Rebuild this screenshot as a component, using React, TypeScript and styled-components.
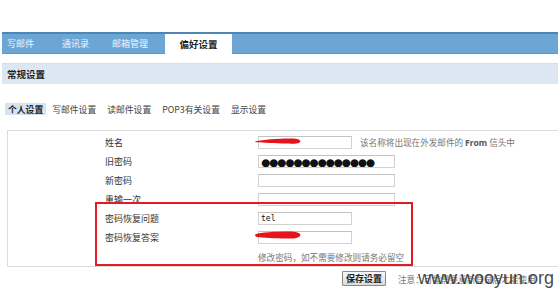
import React from "react";
import styled, { createGlobalStyle } from "styled-components";

const Global = createGlobalStyle`
  html, body { margin: 0; padding: 0; background: #fff; }
  body { font-family: "Noto Sans CJK SC", "Noto Sans", sans-serif; color: #333; }
  * { box-sizing: border-box; }
`;

const Page = styled.div`
  width: 558px;
  height: 291px;
  padding: 32px 0 0 2px;
  overflow: hidden;
`;

const TabBar = styled.div`
  display: flex;
  height: 22px;
  background: #6ba6d4;
  border-top: 2px solid #4e87b7;
  border-bottom: 1px solid #5f9acb;
`;

const Tab = styled.div<{ $w: number; $active?: boolean }>`
  width: ${(p) => p.$w}px;
  display: flex;
  align-items: center;
  justify-content: ${(p) => (p.$active ? "center" : "flex-start")};
  padding-left: ${(p) => (p.$active ? 0 : 5)}px;
  font-size: ${(p) => (p.$active ? 9.5 : 9)}px;
  font-weight: ${(p) => (p.$active ? 700 : 400)};
  color: ${(p) => (p.$active ? "#1e1e1e" : "#eef5fb")};
  background: ${(p) => (p.$active ? "#fff" : "transparent")};
  margin-bottom: ${(p) => (p.$active ? -1 : 0)}px;
`;

const SectionHeader = styled.div`
  margin-top: 9px;
  height: 21px;
  display: flex;
  align-items: center;
  padding-left: 5px;
  background: #dce7f3;
  border-top: 1px solid #d2dfed;
  font-size: 9.5px;
  font-weight: 700;
  color: #1e1e1e;
`;

const SubTabs = styled.div`
  margin-top: 19px;
  display: flex;
  gap: 3px;
  padding-left: 3px;
  height: 12px;
`;

const SubTab = styled.div<{ $active?: boolean }>`
  display: flex;
  align-items: center;
  padding: 0 3px;
  margin-right: ${(p) => (p.$active ? 0 : 2)}px;
  font-size: 8.8px;
  font-weight: ${(p) => (p.$active ? 700 : 400)};
  color: ${(p) => (p.$active ? "#1e1e1e" : "#444")};
  background: ${(p) => (p.$active ? "#d6e3f1" : "transparent")};
`;

const Panel = styled.div`
  position: relative;
  margin: 15px 0 0 5px;
  border: 1px solid #dcdcdc;
  border-right: none;
  padding-top: 2px;
`;

const Row = styled.div`
  display: flex;
  align-items: center;
  height: 19px;
  padding-left: 97px;
`;

const Label = styled.div`
  width: 153px;
  font-size: 9px;
  color: #333;
`;

const FieldWrap = styled.div`
  position: relative;
  display: flex;
`;

const Field = styled.input<{ $w: number; $mono?: boolean }>`
  width: ${(p) => p.$w}px;
  height: 13px;
  padding: 0 2px;
  border: 1px solid #d2d2d2;
  border-top-color: #c2c2c2;
  background: #fff;
  font-family: ${(p) => (p.$mono ? '"DejaVu Sans Mono", monospace' : '"DejaVu Sans", sans-serif')};
  font-size: ${(p) => (p.$mono ? 8 : 10.5)}px;
  color: #111;
  outline: none;
  letter-spacing: ${(p) => (p.$mono ? 0 : -1.1)}px;
`;

const Scribble = styled.svg<{ $top: number }>`
  position: absolute;
  left: -3px;
  top: ${(p) => p.$top}px;
  width: 46px;
  height: 8px;
  overflow: visible;
`;

const Hint = styled.div`
  margin-left: 8px;
  font-size: 8.6px;
  color: #777;
  white-space: nowrap;
  b { font-family: "Noto Sans", sans-serif; font-weight: 700; color: #555; }
`;

const RowHint = styled(Hint)`
  margin-left: 0;
`;

const Highlight = styled.div`
  position: absolute;
  left: 87px;
  top: 71px;
  width: 318px;
  height: 64px;
  border: 2px solid #e01b22;
  pointer-events: none;
`;

const Footer = styled.div`
  position: relative;
  margin-top: 4px;
  display: flex;
  align-items: center;
  padding-left: 340px;
  gap: 12px;
`;

const SaveButton = styled.button`
  height: 15px;
  padding: 0 3px;
  border: 1px solid #8a8a8a;
  border-radius: 1px;
  background: linear-gradient(#f7f7f7, #dcdcdc);
  font-family: "Noto Sans CJK SC", sans-serif;
  font-size: 9px;
  font-weight: 700;
  color: #222;
  line-height: 1;
`;

const Note = styled.div`
  font-size: 8.6px;
  color: #777;
  white-space: nowrap;
`;

const Watermark = styled.div`
  position: absolute;
  left: 416px;
  top: -2px;
  font-family: "Liberation Sans", Arial, sans-serif;
  font-size: 18px;
  line-height: 18px;
  color: rgba(45, 45, 45, 0.88);
  white-space: nowrap;
`;

const NAME_MARK =
  "M0.5 4.2 C 8 2.6, 22 1.6, 36 1.4 C 42 1.3, 45.5 2.4, 45.3 4.4 C 45 6.4, 40 6.9, 32 6.6 C 20 6.3, 8 5.8, 1.5 5.3 C 0.2 5.1, 0 4.5, 0.5 4.2 Z";
const ANSWER_MARK =
  "M0.5 3.2 C 6 1.2, 20 0.4, 34 0.4 C 41 0.4, 45.5 1.6, 45.3 4 C 45 6.8, 40 7.8, 31 7.6 C 19 7.3, 8 6.8, 2 6 C 0 5.6, -0.3 3.8, 0.5 3.2 Z";

const RedMark = ({ top, d }: { top: number; d: string }) => (
  <Scribble $top={top} viewBox="0 0 46 8">
    <path d={d} fill="#e5131b" />
  </Scribble>
);

export default function App() {
  return (
    <>
      <Global />
      <Page>
        <TabBar>
          <Tab $w={55}>写邮件</Tab>
          <Tab $w={50}>通讯录</Tab>
          <Tab $w={58}>邮箱管理</Tab>
          <Tab $w={67} $active>偏好设置</Tab>
        </TabBar>
        <SectionHeader>常规设置</SectionHeader>
        <SubTabs>
          <SubTab $active>个人设置</SubTab>
          <SubTab>写邮件设置</SubTab>
          <SubTab>读邮件设置</SubTab>
          <SubTab>POP3有关设置</SubTab>
          <SubTab>显示设置</SubTab>
        </SubTabs>
        <Panel>
          <Row>
            <Label>姓名</Label>
            <FieldWrap>
              <Field $w={94} readOnly value="" />
              <RedMark top={1} d={NAME_MARK} />
            </FieldWrap>
            <Hint>
              该名称将出现在外发邮件的 <b>From</b> 信头中
            </Hint>
          </Row>
          <Row>
            <Label>旧密码</Label>
            <FieldWrap>
              <Field $w={137} readOnly value="●●●●●●●●●●●●●●" />
            </FieldWrap>
          </Row>
          <Row>
            <Label>新密码</Label>
            <FieldWrap>
              <Field $w={137} readOnly value="" />
            </FieldWrap>
          </Row>
          <Row>
            <Label>重输一次</Label>
            <FieldWrap>
              <Field $w={137} readOnly value="" />
            </FieldWrap>
          </Row>
          <Row>
            <Label>密码恢复问题</Label>
            <FieldWrap>
              <Field $w={94} $mono readOnly value="tel" />
            </FieldWrap>
          </Row>
          <Row>
            <Label>密码恢复答案</Label>
            <FieldWrap>
              <Field $w={94} readOnly value="" />
              <RedMark top={0} d={ANSWER_MARK} />
            </FieldWrap>
          </Row>
          <Row>
            <Label />
            <RowHint>修改密码，如不需要修改则请务必留空</RowHint>
          </Row>
          <Highlight />
        </Panel>
        <Footer>
          <SaveButton>保存设置</SaveButton>
          <Note>注意：可能需要重新登录后才能使用</Note>
          <Watermark>www.wooyun.org</Watermark>
        </Footer>
      </Page>
    </>
  );
}
